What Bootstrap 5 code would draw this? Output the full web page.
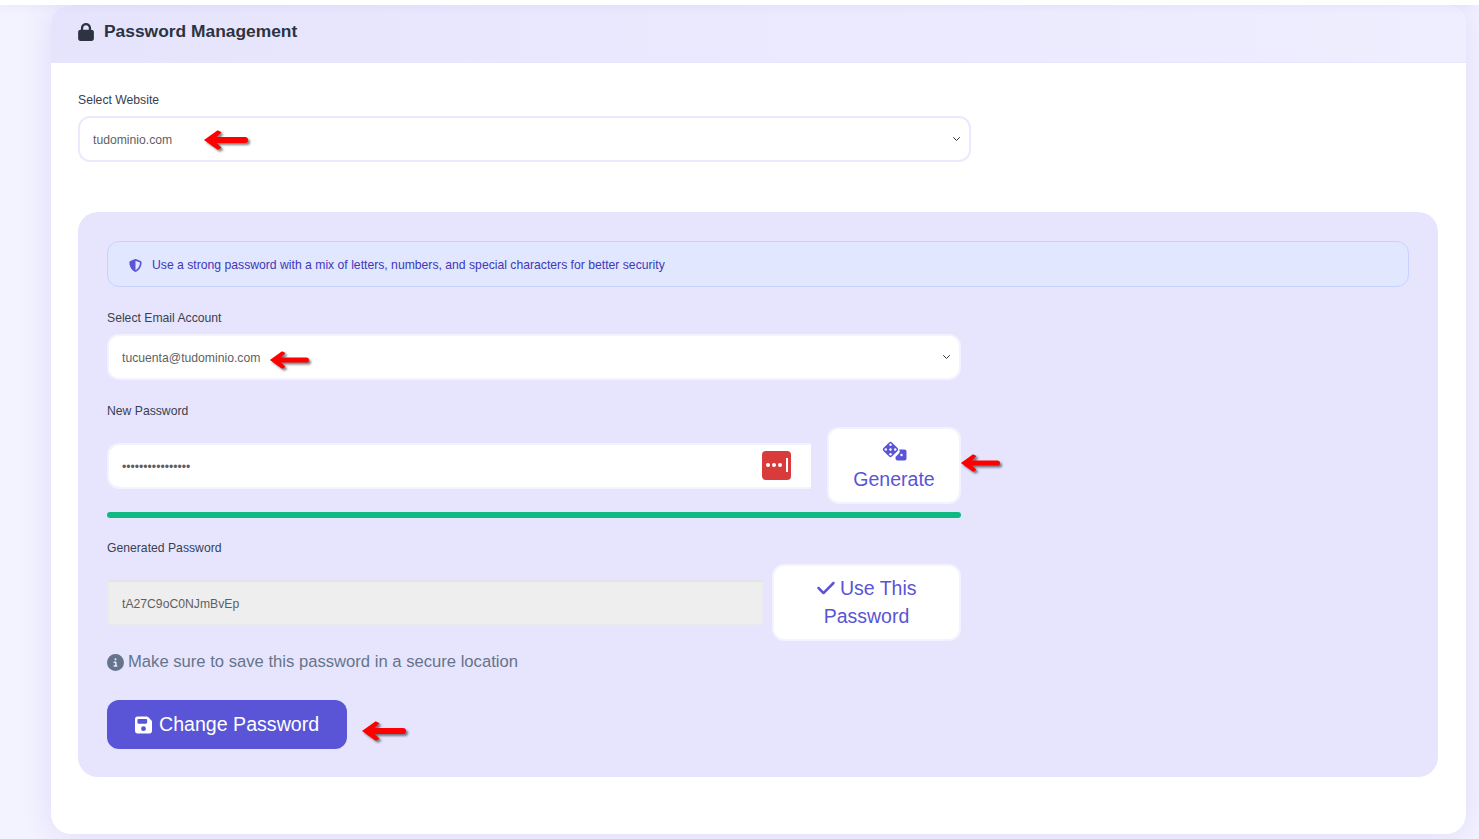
<!DOCTYPE html>
<html lang="en">
<head>
  <meta charset="UTF-8" />
  <title>Password Management</title>
  <link href="https://cdn.jsdelivr.net/npm/bootstrap@5.3.0/dist/css/bootstrap.min.css" rel="stylesheet" />
  <style>
    html, body { height: 839px; overflow: hidden; }
    body { position: relative; background: #f3f2ff; font-family: "Liberation Sans", Arial, sans-serif; font-size: 12.2px; color: #374151; }
    .top-strip { position: relative; z-index: 2; height: 5px; background: #fff; box-shadow: 0 2px 8px rgba(90,85,214,.08); }
    .pm-card { margin: 0 13px 0 51px; height: 829px; border: 0; border-radius: 20px; overflow: hidden; background: #fff; box-shadow: 0 0 30px rgba(90,85,214,.14); }
    .pm-head { height: 58px; padding: 0 27px 3px; display: flex; align-items: center; gap: 10px; border: 0; border-radius: 0; background: linear-gradient(90deg, #e6e4fc, #efeeff); border-bottom: 1px solid #e8e6fd; }
    .pm-head h5 { margin: 0; font-size: 17.4px; font-weight: 700; line-height: 1; color: #2d3340; }
    .pm-head svg { width: 16px; height: 18px; fill: #2d3340; }
    .pm-body { padding: 28px 28px 27px 27px; }
    .pm-label { display: block; margin: 0 0 7px; font-size: 12.2px; line-height: 18px; color: #374151; }
    .pm-select { height: 46px; padding: 2px 30px 0 13px; font-size: 12.2px; color: #5f5f5f; border: 2px solid #ece9fe; border-radius: 12px; background-size: 9px 8px; background-position: right 8px center; }
    .site-select { width: 893px; }
    .pm-panel { margin-top: 50px; padding: 29px; height: 565px; background: #e7e5fe; border-radius: 20px; }
    .pm-note { display: flex; align-items: center; gap: 10px; height: 46px; margin: 0 0 22px; padding: 2px 21px 0; font-size: 12.2px; color: #4038b8; background: #e0e7ff; border: 1px solid #c7d2fe; border-radius: 12px; }
    .pm-note svg { width: 13px; height: 13px; fill: #5955d6; }
    .pm-col { width: 854px; }
    .mail-select { border-color: #f3f2ff; }
    .gap-label { margin-top: 22px; }
    .gen-label { margin-top: 21px; }
    .pw-wrap { position: relative; flex: 1 1 auto; }
    .pw-input { height: 46px; padding: 2px 13px 0; font-size: 12.2px; color: #5f5f5f; border: 2px solid #f3f2ff; border-right: 0; border-radius: 12px 0 0 12px; }
    .pass-badge { position: absolute; right: 20px; top: 8px; width: 29px; height: 29px; display: flex; align-items: center; justify-content: center; gap: 2px; border-radius: 4px; background: #d83b39; }
    .pass-badge i { width: 4px; height: 4px; border-radius: 50%; background: #fff; }
    .pass-badge b { width: 2px; height: 14px; margin-left: 2px; background: #fff; }
    .pm-ghost { font-size: 19.5px; line-height: 28px; color: #5955d6; background: #fff; border: 2px solid #f3f2ff; border-radius: 12px; flex: none; }
    .pm-ghost svg { fill: #5955d6; }
    .pm-ghost:hover { color: #5955d6; background: #fff; border-color: #f3f2ff; }
    .gen-btn { width: 134px; padding: 12px 10px 9px; }
    .use-btn { width: 189px; padding: 8px 10px 9px; }
    .dice-icon { display: block; width: 25px; height: 20px; margin: 0 auto 4px; }
    .check-icon { width: 18px; height: 20px; vertical-align: -3px; }
    .pm-meter { height: 6px; margin-top: 8px; border-radius: 3px; background: #dcdaf7; }
    .pm-meter .progress-bar { background: #10b981; }
    .gen-input { height: 46px; padding: 2px 13px 0; font-size: 12.2px; color: #5f5f5f; background: #eee; border: 2px solid #e9e9ec; border-top-color: #e4e4e6; border-radius: 0; }
    .gen-input:disabled, .gen-input[readonly] { background: #eee; }
    .pm-hint { display: flex; align-items: center; gap: 4px; margin: 8px 0 0; font-size: 16.64px; line-height: 26px; color: #64748b; }
    .pm-hint svg { width: 17px; height: 17px; fill: #64748b; }
    .pm-save { display: inline-flex; align-items: center; gap: 7px; height: 49px; margin-top: 25px; padding: 0 28px; font-size: 19.6px; color: #fff; background: #5955d6; border: 0; border-radius: 12px; }
    .pm-save svg { width: 17px; height: 20px; fill: #fff; }
    .red-arrow { position: absolute; z-index: 3; width: 45px; height: 22px; overflow: visible; filter: drop-shadow(2px 2px 1px rgba(0,0,0,.5)); }
    .arrow-site { left: 203px; top: 129px; }
    .arrow-mail { left: 269px; top: 349px; width: 40px; }
    .arrow-gen { left: 960px; top: 452px; width: 40px; }
    .arrow-save { left: 361px; top: 720px; }
  </style>
</head>
<body>
<div class="top-strip"></div>

<div class="card pm-card">
  <div class="card-header pm-head">
    <svg viewBox="0 0 448 512"><path d="M144 144v48H304V144c0-44.2-35.8-80-80-80s-80 35.8-80 80zM80 192V144C80 64.5 144.5 0 224 0s144 64.5 144 144v48h16c35.3 0 64 28.7 64 64V448c0 35.3-28.7 64-64 64H64c-35.3 0-64-28.7-64-64V256c0-35.3 28.7-64 64-64H80z"/></svg>
    <h5>Password Management</h5>
  </div>
  <div class="card-body pm-body">
    <label class="pm-label" for="siteSelect">Select Website</label>
    <select class="form-select pm-select site-select" id="siteSelect">
      <option>tudominio.com</option>
    </select>

    <div class="pm-panel">
      <div class="pm-note" role="alert">
        <svg viewBox="0 0 512 512"><path d="M256 0c4.6 0 9.2 1 13.4 2.9L457.7 82.8c22 9.3 38.4 31 38.3 57.2c-.5 99.2-41.3 280.7-213.6 363.2c-16.7 8-36.1 8-52.8 0C57.3 420.7 16.5 239.2 16 140c-.1-26.2 16.3-47.9 38.3-57.2L242.7 2.9C246.8 1 251.4 0 256 0zm0 66.8V444.8C394 378 431.1 230.1 432 141.4L256 66.8l0 0z"/></svg>
        <span>Use a strong password with a mix of letters, numbers, and special characters for better security</span>
      </div>

      <div class="pm-col">
        <label class="pm-label" for="mailSelect">Select Email Account</label>
        <select class="form-select pm-select mail-select" id="mailSelect">
          <option>tucuenta@tudominio.com</option>
        </select>

        <label class="pm-label gap-label" for="newPass">New Password</label>
        <div class="d-flex align-items-center gap-3">
          <div class="pw-wrap">
            <input type="password" class="form-control pw-input" id="newPass" value="tA27C9oC0NJmBvEp" />
            <span class="pass-badge"><i></i><i></i><i></i><b></b></span>
          </div>
          <button type="button" class="btn pm-ghost gen-btn">
            <svg class="dice-icon" viewBox="0 0 25 20">
              <rect x="2.5" y="2.5" width="12" height="12" rx="2" transform="rotate(45 8.5 8.5)"/>
              <path d="M15.5 8.5h7a2 2 0 0 1 2 2v7a2 2 0 0 1-2 2h-7a2 2 0 0 1-2-2v-1.6l3.6-3.6a3 3 0 0 0 0-3.8z"/>
              <g fill="#fff"><circle cx="8.5" cy="3.8" r="1.2"/><circle cx="8.5" cy="8.5" r="1.2"/><circle cx="8.5" cy="13.2" r="1.2"/><circle cx="3.8" cy="8.5" r="1.2"/><circle cx="13.2" cy="8.5" r="1.2"/><circle cx="19.5" cy="14" r="1.2"/></g>
            </svg>
            Generate
          </button>
        </div>
        <div class="progress pm-meter">
          <div class="progress-bar w-100"></div>
        </div>

        <label class="pm-label gen-label" for="genPass">Generated Password</label>
        <div class="d-flex align-items-center gap-2">
          <input type="text" class="form-control gen-input" id="genPass" value="tA27C9oC0NJmBvEp" readonly />
          <button type="button" class="btn pm-ghost use-btn">
            <svg class="check-icon" viewBox="0 0 448 512"><path d="M470.6 105.4c12.5 12.5 12.5 32.8 0 45.3l-256 256c-12.5 12.5-32.8 12.5-45.3 0l-128-128c-12.5-12.5-12.5-32.8 0-45.3s32.8-12.5 45.3 0L192 338.7 425.4 105.4c12.5-12.5 32.8-12.5 45.3 0z" transform="translate(-32 0)"/></svg>
            Use This Password
          </button>
        </div>
      </div>

      <p class="pm-hint">
        <svg viewBox="0 0 512 512"><path d="M256 512A256 256 0 1 0 256 0a256 256 0 1 0 0 512zM216 336h24V272H216c-13.3 0-24-10.7-24-24s10.7-24 24-24h48c13.3 0 24 10.7 24 24v88h8c13.3 0 24 10.7 24 24s-10.7 24-24 24H216c-13.3 0-24-10.7-24-24s10.7-24 24-24zm40-208a32 32 0 1 1 0 64 32 32 0 1 1 0-64z"/></svg>
        Make sure to save this password in a secure location
      </p>

      <button type="button" class="btn pm-save">
        <svg viewBox="0 0 448 512"><path d="M64 32C28.7 32 0 60.7 0 96V416c0 35.3 28.7 64 64 64H384c35.3 0 64-28.7 64-64V173.3c0-17-6.7-33.3-18.7-45.3L352 50.7C340 38.7 323.7 32 306.7 32H64zm0 96c0-17.7 14.3-32 32-32H288c17.7 0 32 14.3 32 32v64c0 17.7-14.3 32-32 32H96c-17.7 0-32-14.3-32-32V128zM224 288a64 64 0 1 1 0 128 64 64 0 1 1 0-128z"/></svg>
        Change Password
      </button>
    </div>
  </div>
</div>

<!-- annotation arrows drawn over the screenshot -->
<svg class="red-arrow arrow-site" viewBox="0 0 46 22"><path fill="#f00" d="M1 11 15 1l4 2-5 5h29a3 3 0 0 1 0 6H14l5 5-4 2z"/></svg>
<svg class="red-arrow arrow-mail" viewBox="0 0 46 22"><path fill="#f00" d="M1 11 15 1l4 2-5 5h29a3 3 0 0 1 0 6H14l5 5-4 2z"/></svg>
<svg class="red-arrow arrow-gen" viewBox="0 0 46 22"><path fill="#f00" d="M1 11 15 1l4 2-5 5h29a3 3 0 0 1 0 6H14l5 5-4 2z"/></svg>
<svg class="red-arrow arrow-save" viewBox="0 0 46 22"><path fill="#f00" d="M1 11 15 1l4 2-5 5h29a3 3 0 0 1 0 6H14l5 5-4 2z"/></svg>

<script src="https://cdn.jsdelivr.net/npm/bootstrap@5.3.0/dist/js/bootstrap.bundle.min.js"></script>
</body>
</html>
